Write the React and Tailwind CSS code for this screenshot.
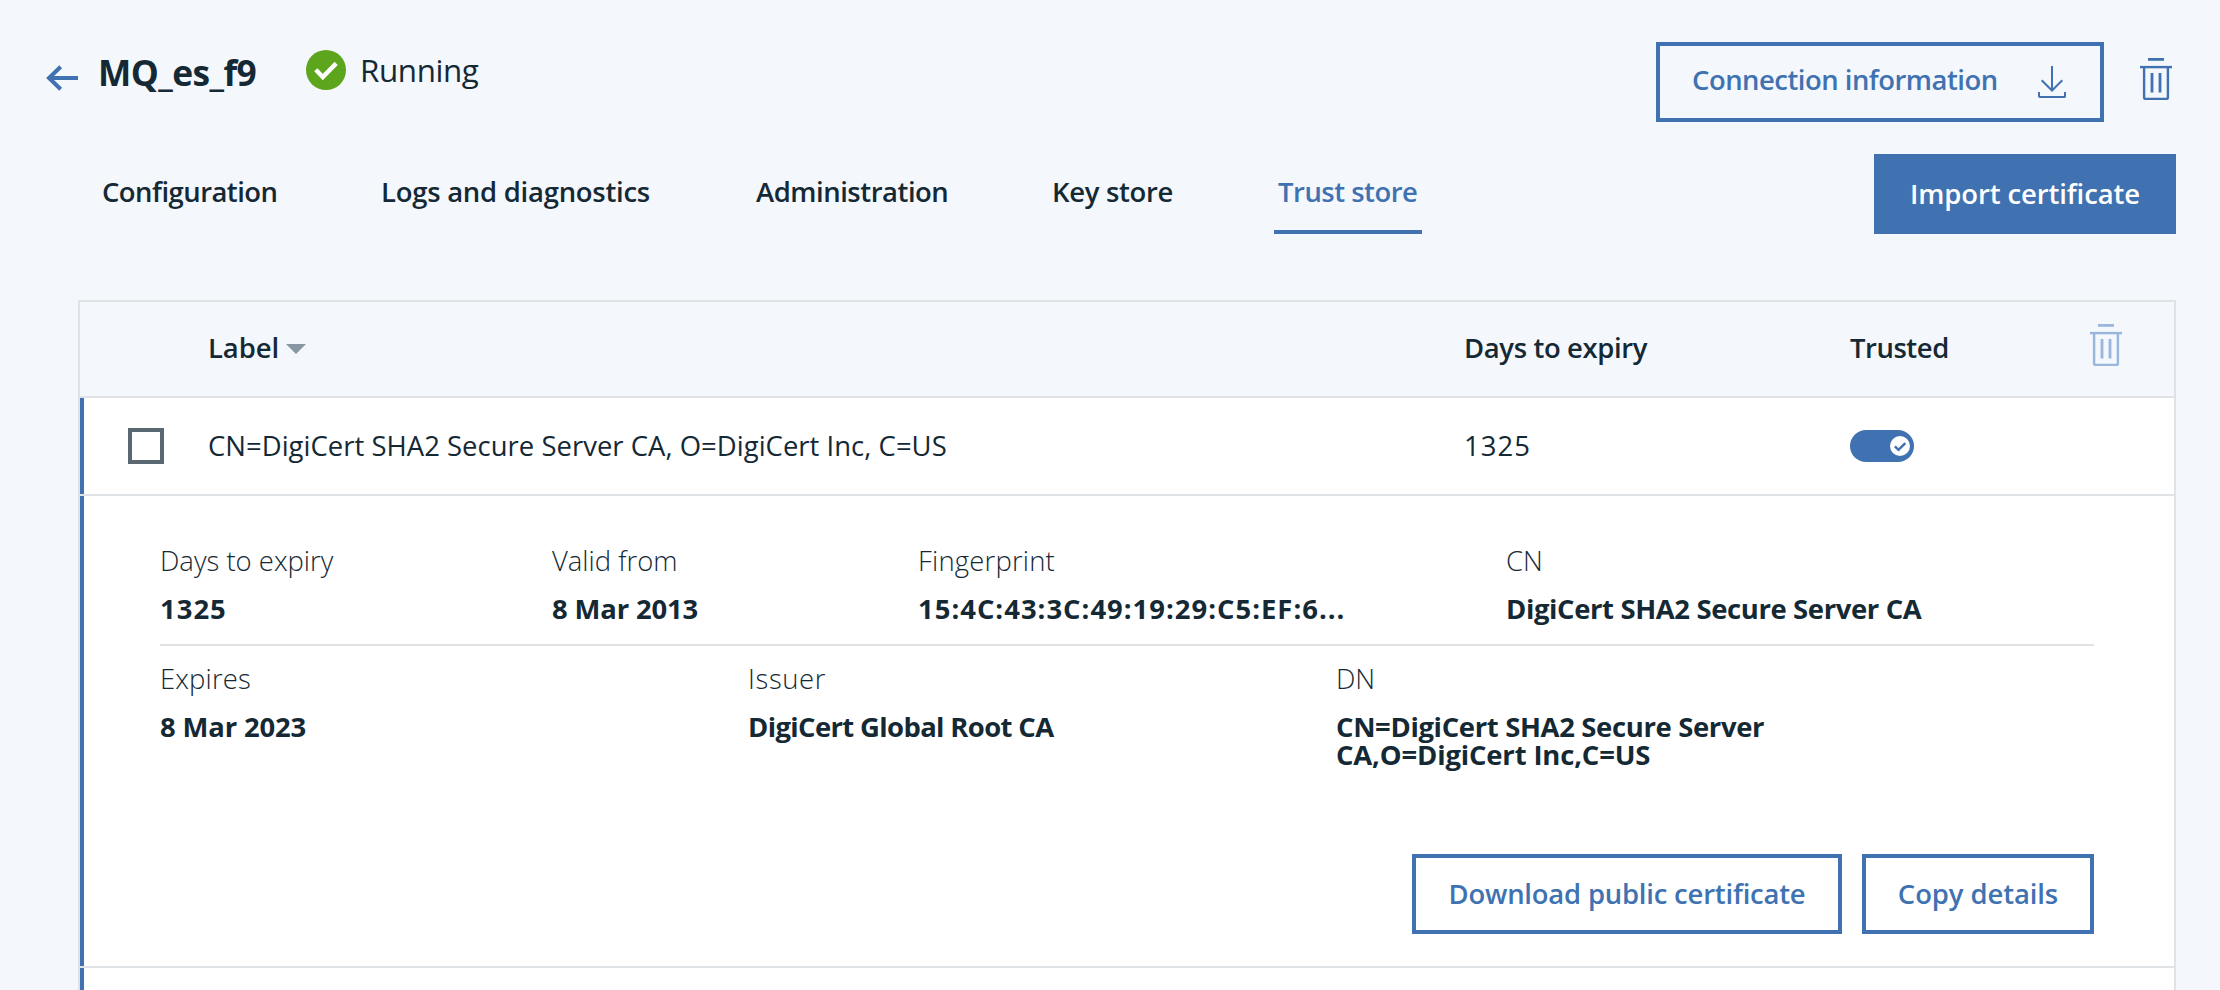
function TrashIcon({ className }) {
  return (
    <svg className={className} width="32" height="42" viewBox="0 0 32 42" fill="none" stroke="currentColor">
      <path d="M8 1.4h16" strokeWidth="2.8" />
      <path d="M0 9.1h32" strokeWidth="2.4" />
      <path d="M4.1 9.5v30a1.4 1.4 0 0 0 1.4 1.4h21a1.4 1.4 0 0 0 1.4-1.4v-30" strokeWidth="2.4" />
      <path d="M12 15v19.5M20 15v19.5" strokeWidth="2.8" />
    </svg>
  );
}

function DownloadIcon() {
  return (
    <svg width="28" height="32" viewBox="0 0 28 32" fill="none" stroke="currentColor" strokeWidth="2">
      <path d="M14 0v24M3.7 14.2 14 24.5l10.3-10.3" />
      <path d="M1 26v4.2a.8.8 0 0 0 .8.8h24.4a.8.8 0 0 0 .8-.8V26" />
    </svg>
  );
}

function BackIcon() {
  return (
    <svg width="32" height="26" viewBox="0 0 32 26" fill="none" stroke="currentColor" strokeWidth="4" className="text-[#4072b1]">
      <path d="M3 13h29" />
      <path d="M14.7 1.7 3 13l11.7 11.3" />
    </svg>
  );
}

function RunningIcon() {
  return (
    <svg width="40" height="40" viewBox="0 0 40 40" fill="none">
      <circle cx="20" cy="20" r="20" fill="#5ea51e" />
      <path d="M9.8 19.8 16.8 27 30.2 13.4" stroke="#fff" strokeWidth="4.4" />
    </svg>
  );
}

function Toggle() {
  return (
    <div className="flex h-8 w-16 items-center justify-end rounded-full bg-[#4072b1] pr-1">
      <svg width="20" height="20" viewBox="0 0 20 20" fill="none">
        <circle cx="10" cy="10" r="10" fill="#fff" />
        <path d="m4.9 10.3 3.6 3.5 6.8-6.6" stroke="#4072b1" strokeWidth="2.5" />
      </svg>
    </div>
  );
}

const tabs = [
  { label: "Configuration", className: "w-[279px] tracking-[-0.52px]" },
  { label: "Logs and diagnostics", className: "w-[375px] tracking-[-0.24px]" },
  { label: "Administration", className: "w-[296px] tracking-[-0.46px]" },
  { label: "Key store", className: "w-[222px] tracking-[-0.3px]" },
];

function Field({ label, value, labelClass = "", valueClass = "" }) {
  return (
    <div className="flex flex-col gap-5 leading-7">
      <div className={`font-light ${labelClass}`}>{label}</div>
      <div className={`font-bold ${valueClass}`}>{value}</div>
    </div>
  );
}

export default function App() {
  return (
    <div className="h-[990px] w-[2220px] overflow-hidden bg-[#f4f7fc] pt-[42px] font-['Open_Sans',sans-serif] text-[27.44px] leading-9 whitespace-nowrap text-[#152935]">
      <header className="flex h-20 items-start pr-11 pl-[46px]">
        <div className="pt-[23px]">
          <BackIcon />
        </div>
        <h1 className="w-[228px] pt-1.5 pl-5 text-[35.3px] leading-[48px] font-bold tracking-[-0.55px]">MQ_es_f9</h1>
        <div className="flex items-center gap-3.5 pt-2">
          <RunningIcon />
          <span className="text-[31.36px] leading-10 tracking-[-0.39px]">Running</span>
        </div>
        <button className="ml-auto flex h-20 w-[448px] items-center justify-between border-4 border-[#4072b1] pr-[34px] pl-8 font-semibold text-[#4072b1]">
          <span className="pb-[5px] tracking-[-0.5px]">Connection information</span>
          <DownloadIcon />
        </button>
        <button className="mt-4 mr-1 ml-9 text-[#4072b1]">
          <TrashIcon />
        </button>
      </header>

      <nav className="mt-8 flex h-20 pr-11 pl-[102px] font-semibold">
        {tabs.map((t) => (
          <a key={t.label} className={`pt-5 ${t.className}`}>
            {t.label}
          </a>
        ))}
        <a className="w-[148px] border-b-4 border-[#4072b1] pt-5 pl-1 tracking-[-0.48px] text-[#4072b1]">Trust store</a>
        <button className="ml-auto h-20 w-[302px] bg-[#4072b1] font-semibold tracking-[-0.1px] text-white">Import certificate</button>
      </nav>

      <main className="mt-[66px] ml-[78px] w-[2098px] border-2 border-[#dfe3e6]">
        <div className="grid h-24 grid-cols-[128px_1256px_386px_240px_1fr] items-center border-b-2 border-[#dfe3e6] font-semibold">
          <div />
          <div className="flex items-center gap-[7px] pb-[3px] tracking-[-0.07px]">
            Label
            <svg width="20" height="10" viewBox="0 0 20 10" className="mt-[3px]" fill="#8897a2">
              <path d="M0 0h20L10 10z" />
            </svg>
          </div>
          <div className="pb-[3px] tracking-[-0.35px]">Days to expiry</div>
          <div className="pb-[3px] tracking-[-0.44px]">Trusted</div>
          <TrashIcon className="-mt-2 text-[#9ab6dc]" />
        </div>

        <div className="border-b-2 border-[#dfe3e6] bg-white">
          <div className="grid h-24 grid-cols-[124px_1256px_386px_240px_1fr] items-center border-l-4 border-[#4072b1]">
            <div className="ml-11 size-9 border-4 border-[#5a6872]" />
            <div className="pb-px tracking-[0.03px]">CN=DigiCert SHA2 Secure Server CA, O=DigiCert Inc, C=US</div>
            <div className="pb-px tracking-[1.06px]">1325</div>
            <Toggle />
          </div>
        </div>

        <div className="border-b-2 border-[#dfe3e6] bg-white">
          <div className="h-[470px] border-l-4 border-[#4072b1] pt-[51px] pr-20 pl-[76px]">
            <div className="grid grid-cols-[392px_366px_588px_1fr]">
              <Field label="Days to expiry" value="1325" valueClass="tracking-[1px]" />
              <Field label="Valid from" value="8 Mar 2013" valueClass="tracking-[-0.15px]" />
              <Field label="Fingerprint" value="15:4C:43:3C:49:19:29:C5:EF:6..." labelClass="tracking-[0.2px]" valueClass="tracking-[1px]" />
              <Field label="CN" value="DigiCert SHA2 Secure Server CA" valueClass="tracking-[-0.37px]" />
            </div>
            <div className="mt-[21px] h-0.5 bg-[#dfe3e6]" />
            <div className="mt-[19px] grid h-[104px] grid-cols-[588px_588px_1fr]">
              <Field label="Expires" value="8 Mar 2023" labelClass="tracking-[0.16px]" valueClass="tracking-[-0.15px]" />
              <Field label="Issuer" value="DigiCert Global Root CA" labelClass="tracking-[0.6px]" valueClass="tracking-[-0.63px]" />
              <Field
                label="DN"
                value={
                  <>
                    <div className="tracking-[-0.34px]">CN=DigiCert SHA2 Secure Server</div>
                    <div className="tracking-[-0.15px]">CA,O=DigiCert Inc,C=US</div>
                  </>
                }
              />
            </div>
            <div className="mt-[85px] flex justify-end gap-5 font-semibold text-[#4072b1]">
              <button className="h-20 w-[430px] border-4 border-[#4072b1] tracking-[-0.2px]">Download public certificate</button>
              <button className="h-20 w-[232px] border-4 border-[#4072b1] tracking-[-0.09px]">Copy details</button>
            </div>
          </div>
        </div>

        <div className="bg-white">
          <div className="h-24 border-l-4 border-[#4072b1]" />
        </div>
      </main>
    </div>
  );
}
